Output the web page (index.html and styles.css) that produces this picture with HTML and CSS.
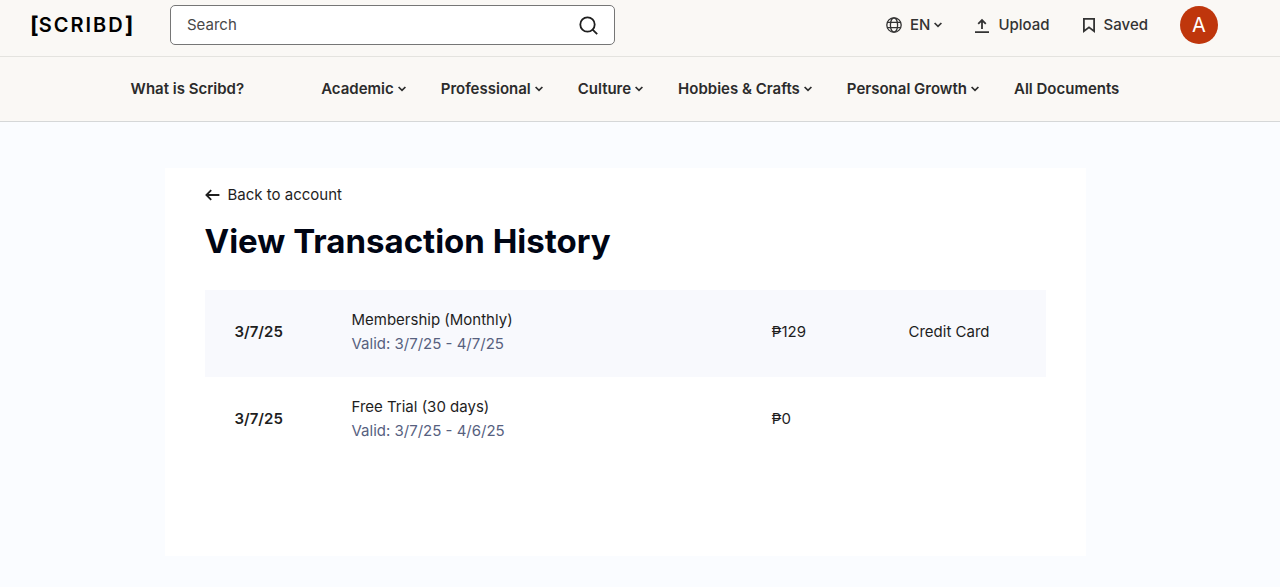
FILE: index.html
```
<!DOCTYPE html>
<html lang="en">
<head>
  <meta charset="UTF-8">
  <meta name="viewport" content="width=device-width, initial-scale=1.0">
  <title>View Transaction History | Scribd</title>
  <link rel="stylesheet" href="styles.css">
</head>
<body>
  <header class="header">
    <a class="logo" href="#"><span class="bracket">[</span><span class="wordmark">SCRIBD</span><span class="bracket">]</span></a>
    <form class="search" role="search">
      <input type="search" placeholder="Search" aria-label="Search">
      <button type="submit" aria-label="Submit search">
        <svg width="22" height="22" viewBox="0 0 22 22" fill="none" stroke="currentColor" stroke-width="1.8"><circle cx="10.5" cy="10.5" r="7.2"/><path d="M15.6 15.6l4.6 4.6"/></svg>
      </button>
    </form>
    <div class="actions">
      <button class="action language" type="button">
        <svg class="globe" width="16" height="16" viewBox="0 0 16 16" fill="none" stroke="currentColor" stroke-width="1.3"><circle cx="8" cy="8" r="7.2"/><ellipse cx="8" cy="8" rx="3.6" ry="7.2"/><path d="M1.4 5.4h13.2M1.4 10.6h13.2"/></svg>
        <span>EN</span>
        <svg class="chevron" width="8" height="6" viewBox="0 0 8 6" fill="none" stroke="currentColor" stroke-width="1.7"><path d="M.6 1L4 4.4 7.4 1"/></svg>
      </button>
      <a class="action" href="#">
        <svg width="16" height="16" viewBox="0 0 16 16" fill="none" stroke="currentColor" stroke-width="1.8"><path d="M8 12V3.2M4.2 6.8L8 3l3.8 3.8M1 15.1h14"/></svg>
        <span>Upload</span>
      </a>
      <a class="action" href="#">
        <svg width="14" height="16" viewBox="0 0 14 16" fill="none" stroke="currentColor" stroke-width="1.8"><path d="M1.9 1.9h10.2v12.3L7 10.4l-5.1 3.8z"/></svg>
        <span>Saved</span>
      </a>
      <button class="avatar" type="button" aria-label="Account">A</button>
    </div>
  </header>

  <nav class="nav">
    <a class="about" href="#">What is Scribd?</a>
    <button type="button">Academic <svg class="chevron" width="8" height="6" viewBox="0 0 8 6" fill="none" stroke="currentColor" stroke-width="1.7"><path d="M.6 1L4 4.4 7.4 1"/></svg></button>
    <button type="button">Professional <svg class="chevron" width="8" height="6" viewBox="0 0 8 6" fill="none" stroke="currentColor" stroke-width="1.7"><path d="M.6 1L4 4.4 7.4 1"/></svg></button>
    <button type="button">Culture <svg class="chevron" width="8" height="6" viewBox="0 0 8 6" fill="none" stroke="currentColor" stroke-width="1.7"><path d="M.6 1L4 4.4 7.4 1"/></svg></button>
    <button type="button">Hobbies &amp; Crafts <svg class="chevron" width="8" height="6" viewBox="0 0 8 6" fill="none" stroke="currentColor" stroke-width="1.7"><path d="M.6 1L4 4.4 7.4 1"/></svg></button>
    <button type="button">Personal Growth <svg class="chevron" width="8" height="6" viewBox="0 0 8 6" fill="none" stroke="currentColor" stroke-width="1.7"><path d="M.6 1L4 4.4 7.4 1"/></svg></button>
    <a href="#">All Documents</a>
  </nav>

  <main class="page">
    <section class="card">
      <a class="back" href="#">
        <svg width="15" height="12" viewBox="0 0 15 12" fill="none" stroke="currentColor" stroke-width="1.8"><path d="M14.4 6H1.8M6.2 1.2L1.4 6l4.8 4.8"/></svg>
        <span>Back to account</span>
      </a>
      <h1>View Transaction History</h1>
      <table class="history">
        <tbody>
          <tr>
            <th class="date" scope="row">3/7/25</th>
            <td>Membership (Monthly)<div class="valid">Valid: 3/7/25 - 4/7/25</div></td>
            <td class="amount">₱129</td>
            <td class="method">Credit Card</td>
          </tr>
          <tr>
            <th class="date" scope="row">3/7/25</th>
            <td>Free Trial (30 days)<div class="valid">Valid: 3/7/25 - 4/6/25</div></td>
            <td class="amount">₱0</td>
            <td class="method"></td>
          </tr>
        </tbody>
      </table>
    </section>
  </main>
</body>
</html>
```
FILE: styles.css
```
* {
  box-sizing: border-box;
}

body {
  margin: 0;
  min-height: 100vh;
  background-color: #fafcff;
  color: #1e1e1e;
  font-family: Inter, "Liberation Sans", Arial, sans-serif;
  font-size: 15px;
  line-height: 24px;
}

a {
  color: inherit;
  text-decoration: none;
}

button {
  background: none;
  border: none;
  color: inherit;
  cursor: pointer;
  font: inherit;
  padding: 0;
}

svg {
  flex-shrink: 0;
}

/* Top bar */
.header {
  display: flex;
  align-items: center;
  background-color: #faf8f5;
  border-bottom: 1px solid #e4e3df;
  padding: 5px 62px 11px 30px;
}

.logo {
  display: flex;
  align-items: center;
  color: #000;
  font-size: 20px;
  font-weight: 600;
  width: 140px;
}

.wordmark {
  letter-spacing: 2px;
}

.bracket {
  font-size: 23px;
  font-weight: 700;
}

.search {
  display: flex;
  align-items: center;
  flex: 0 1 445px;
  height: 40px;
  background-color: #fff;
  border: 1px solid #767676;
  border-radius: 5px;
  padding: 0 15px 0 16px;
}

.search input {
  flex: 1;
  min-width: 0;
  background: none;
  border: none;
  color: inherit;
  font: inherit;
  outline: none;
  padding: 0;
}

.search input::placeholder {
  color: #484848;
  opacity: 1;
}

.search button {
  display: flex;
}

.actions {
  display: flex;
  align-items: center;
  gap: 32px;
  margin-left: auto;
}

.action {
  display: flex;
  align-items: center;
  gap: 8px;
  color: #333;
  font-weight: 500;
}

.language {
  gap: 4px;
}

.globe {
  margin-right: 4px;
}

.avatar {
  width: 38px;
  height: 38px;
  background-color: #bf360c;
  border-radius: 50%;
  color: #fff;
  font-size: 20px;
}

/* Categories */
.nav {
  display: flex;
  align-items: center;
  justify-content: center;
  gap: 35px;
  background-color: #faf8f5;
  border-bottom: 1px solid #d5d7d8;
  color: #2b2b2b;
  font-weight: 600;
  padding: 20px 30px 20px 0;
}

.about {
  margin-right: 42px;
}

.nav button {
  display: flex;
  align-items: center;
  gap: 4px;
}

/* Content */
.page {
  padding: 46px 30px 30px 0;
}

.card {
  width: 92%;
  max-width: 921px;
  min-height: 388px;
  margin: 0 auto;
  background-color: #fff;
  padding: 15px 40px;
}

.back {
  display: inline-flex;
  align-items: center;
  gap: 8px;
}

h1 {
  margin: 12px 0 28px;
  color: #000514;
  font-size: 33px;
  font-weight: 700;
  line-height: 42px;
}

.history {
  width: 100%;
  border-collapse: collapse;
  table-layout: fixed;
}

.history tr:nth-child(odd) {
  background-color: #f8f9fd;
}

.history th,
.history td {
  padding: 18px 0 21px;
  text-align: left;
  vertical-align: middle;
}

.history .date {
  width: 147px;
  font-weight: 600;
  padding-left: 30px;
}

.valid {
  color: #57617f;
}

.amount,
.method {
  width: 137px;
}
```
